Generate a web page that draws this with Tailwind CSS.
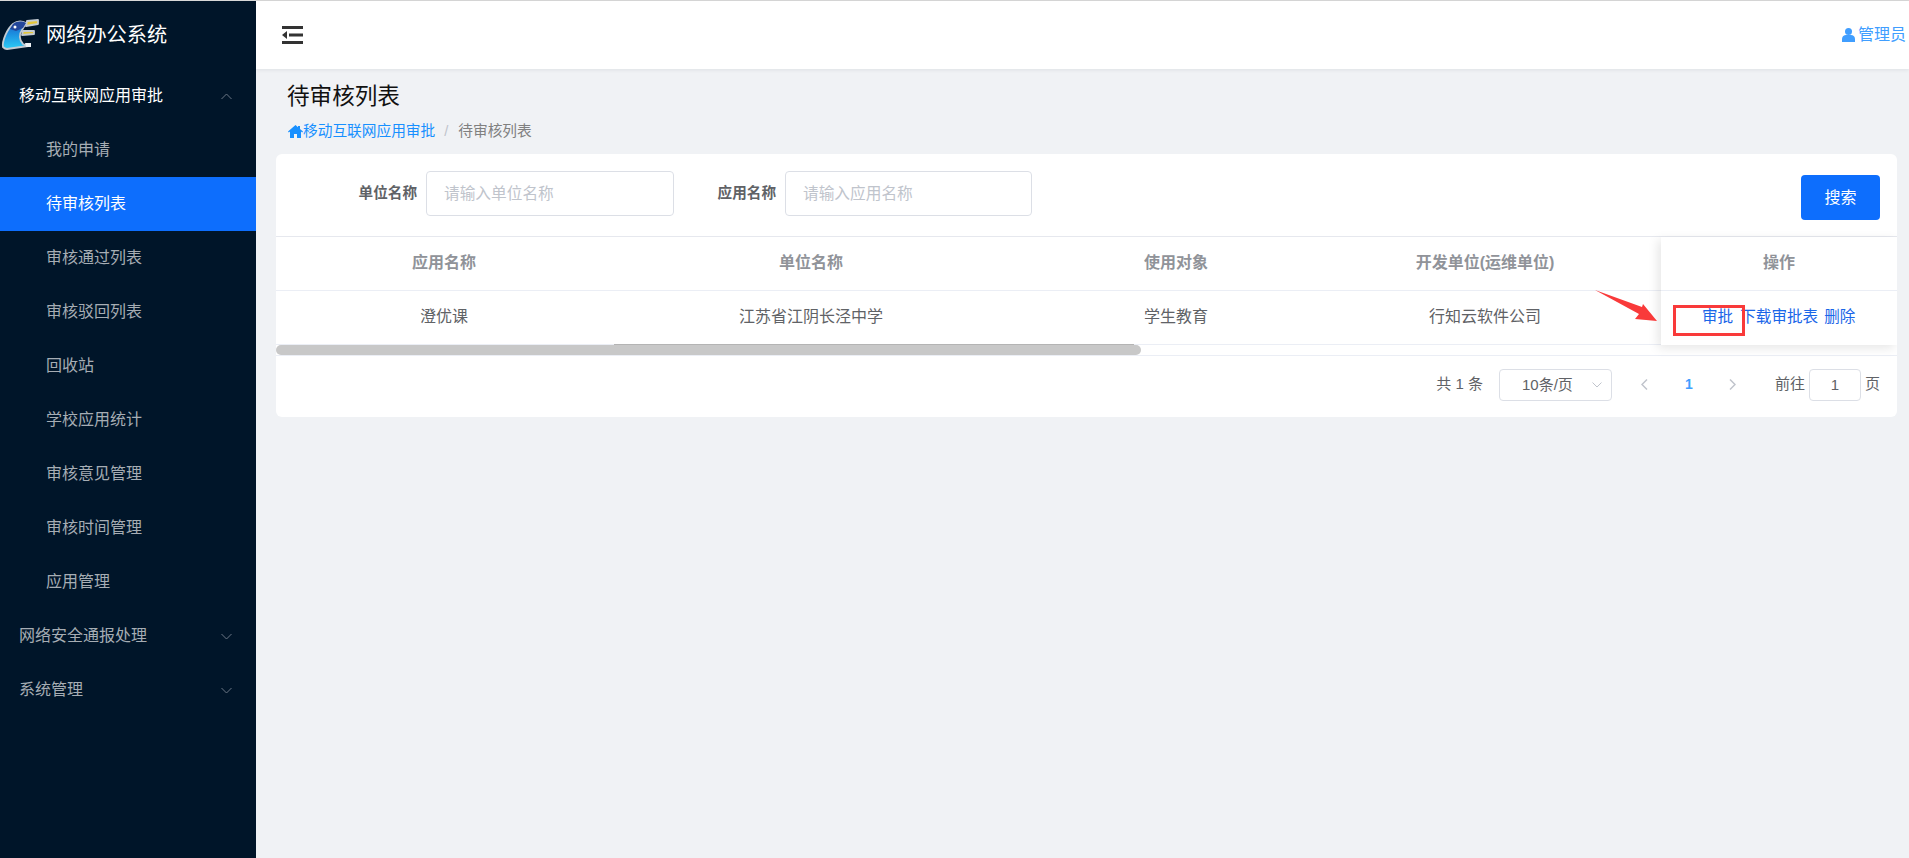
<!DOCTYPE html>
<html lang="zh-CN">
<head>
    <meta charset="UTF-8">
    <title>待审核列表 - 网络办公系统</title>
    <script src="https://cdn.jsdelivr.net/npm/@tailwindcss/browser@4"></script>
</head>
<body class="bg-[#f0f2f5] font-['Liberation_Sans','Noto_Sans_CJK_SC',sans-serif] overflow-hidden">
<div class="flex flex-col h-[858px] w-[1909px]">
    <div class="h-px bg-[#d8d8d8] shrink-0"></div>
    <div class="flex flex-1 min-h-0">
        <!-- Sidebar -->
        <aside class="w-[256px] shrink-0 bg-[#001529] text-[16px]">
            <div class="flex items-center h-[68px]">
                <svg class="w-[40px] h-[34px] ml-px shrink-0" viewBox="0 0 40 34">
                    <defs>
                        <linearGradient id="logo-body" x1="0" y1="0" x2="0" y2="1">
                            <stop offset="0" stop-color="#1d5fc0"/>
                            <stop offset="0.45" stop-color="#1c8fe0"/>
                            <stop offset="1" stop-color="#2ccdf5"/>
                        </linearGradient>
                    </defs>
                    <g stroke="#c3cbd2" stroke-width="1.800" stroke-linejoin="round">
                        <path d="M2 29C1 23 6 11 12 6 16 3 21 3 25 5L21 12C18 16 18 22 22 26L27 28 6 31C4 31 3 30 2 29Z" fill="url(#logo-body)"/>
                        <path d="M26 3 37 2V6L25 8Z" fill="#e3c63a"/>
                        <path d="M22 13H33V16L21 17Z" fill="#e3c63a"/>
                    </g>
                    <path d="M12 6C16 3 21 3 25 5L22 10 15 13 9 11Z" fill="#23479a"/>
                    <circle cx="14" cy="9" r="1.500" fill="#ffffff"/>
                    <path d="M24 25H30V29L25 29Z" fill="#eef1f4"/>
                </svg>
                <span class="ml-[5px] text-[20.2px] text-white">网络办公系统</span>
            </div>
            <nav>
                <div class="flex items-center justify-between h-[54px] pl-[19px] pr-[24px] text-white">
                    <span>移动互联网应用审批</span>
                    <svg class="w-[11px] h-[7px] text-[#6b7785]" viewBox="0 0 11 7" fill="none" stroke="currentColor"><path d="M.5 6 5.500 1l5 5"/></svg>
                </div>
                <a class="flex items-center h-[54px] pl-[46px] text-[#a6adb4]">我的申请</a>
                <a class="flex items-center h-[54px] pl-[46px] text-white bg-[#0d6efd]">待审核列表</a>
                <a class="flex items-center h-[54px] pl-[46px] text-[#a6adb4]">审核通过列表</a>
                <a class="flex items-center h-[54px] pl-[46px] text-[#a6adb4]">审核驳回列表</a>
                <a class="flex items-center h-[54px] pl-[46px] text-[#a6adb4]">回收站</a>
                <a class="flex items-center h-[54px] pl-[46px] text-[#a6adb4]">学校应用统计</a>
                <a class="flex items-center h-[54px] pl-[46px] text-[#a6adb4]">审核意见管理</a>
                <a class="flex items-center h-[54px] pl-[46px] text-[#a6adb4]">审核时间管理</a>
                <a class="flex items-center h-[54px] pl-[46px] text-[#a6adb4]">应用管理</a>
                <div class="flex items-center justify-between h-[54px] pl-[19px] pr-[24px] text-[#a6adb4]">
                    <span>网络安全通报处理</span>
                    <svg class="w-[11px] h-[7px] text-[#6b7785]" viewBox="0 0 11 7" fill="none" stroke="currentColor"><path d="M.5 1l5 5 5-5"/></svg>
                </div>
                <div class="flex items-center justify-between h-[54px] pl-[19px] pr-[24px] text-[#a6adb4]">
                    <span>系统管理</span>
                    <svg class="w-[11px] h-[7px] text-[#6b7785]" viewBox="0 0 11 7" fill="none" stroke="currentColor"><path d="M.5 1l5 5 5-5"/></svg>
                </div>
            </nav>
        </aside>

        <div class="flex-1 min-w-0 flex flex-col">
            <!-- Header -->
            <header class="h-[68px] shrink-0 bg-white shadow-[0_1px_4px_rgba(0,21,41,0.08)] flex items-center justify-between pl-[26px] pr-[3px] relative">
                <svg class="w-[21px] h-[18px] text-[#333]" viewBox="0 0 21 18" fill="currentColor">
                    <path d="M0 0h21v3H0zM7 7.500h14v3H7zM0 15h21v3H0zM5 5v8L0 9z"/>
                </svg>
                <div class="flex items-center gap-[3px] text-[16px] text-[#409eff]">
                    <svg class="w-[13px] h-[14px]" viewBox="0 0 13 14" fill="currentColor">
                        <circle cx="6.500" cy="3.500" r="3.500"/>
                        <path d="M0 14v-3c0-2.500 2-4 4-4h5c2 0 4 1.500 4 4v3z"/>
                    </svg>
                    <span>管理员</span>
                </div>
            </header>

            <main class="flex-1 pl-[20px] pr-[12px]">
                <div class="pl-[11px] pt-[13px] pb-[12px] h-[85px]">
                    <h1 class="text-[22.6px] leading-[30px] text-[#111]">待审核列表</h1>
                    <div class="mt-[9px] flex items-center text-[14.7px] leading-[20px]">
                        <svg class="ml-px w-[15px] h-[13px] text-[#1890ff]" viewBox="0 0 15 13" fill="currentColor">
                            <path d="M7.500 0 0 6.500l.8.9L2 6.400V13h4V9h3v4h4V6.400l1.200 1 .8-.9L12 4V1h-2v1.300z"/>
                        </svg>
                        <span class="text-[#1890ff]">移动互联网应用审批</span>
                        <span class="ml-[9px] mr-[10px] text-[#c0c4cc]">/</span>
                        <span class="text-[#808080]">待审核列表</span>
                    </div>
                </div>

                <!-- Card -->
                <section class="bg-white rounded-[6px] h-[263px] overflow-hidden relative">
                    <div class="flex items-start h-[83px] pt-[17px] border-b border-[#e6e8ee]">
                        <label class="w-[150px] h-[45px] flex items-center justify-end text-[14.6px] font-bold text-[#606266] pr-[9px] shrink-0">单位名称</label>
                        <div class="w-[248px] h-[45px] border border-[#dcdfe6] rounded-[4px] pl-[17px] flex items-center text-[15.7px] text-[#c0c4cc] shrink-0">请输入单位名称</div>
                        <label class="w-[111px] h-[45px] flex items-center justify-end text-[14.6px] font-bold text-[#606266] pr-[9px] shrink-0">应用名称</label>
                        <div class="w-[247px] h-[45px] border border-[#dcdfe6] rounded-[4px] pl-[17px] flex items-center text-[15.7px] text-[#c0c4cc] shrink-0">请输入应用名称</div>
                        <button class="ml-auto mr-[17px] w-[79px] h-[45px] mt-[4px] bg-[#0d6efd] rounded-[4px] text-white text-[16px]">搜索</button>
                    </div>

                    <!-- Table -->
                    <div class="grid grid-cols-[336px_398px_332px_286px_1fr] text-center text-[16px]">
                        <div class="h-[54px] pb-[2px] flex items-center justify-center font-bold text-[#909399] border-b border-[#ebeef5]">应用名称</div>
                        <div class="h-[54px] pb-[2px] flex items-center justify-center font-bold text-[#909399] border-b border-[#ebeef5]">单位名称</div>
                        <div class="h-[54px] pb-[2px] flex items-center justify-center font-bold text-[#909399] border-b border-[#ebeef5]">使用对象</div>
                        <div class="h-[54px] pb-[2px] flex items-center justify-center font-bold text-[#909399] border-b border-[#ebeef5]">开发单位(运维单位)</div>
                        <div class="h-[54px] border-b border-[#ebeef5]"></div>
                        <div class="h-[54px] pb-[2px] flex items-center justify-center text-[#606266] border-b border-[#ebeef5]">澄优课</div>
                        <div class="h-[54px] pb-[2px] flex items-center justify-center text-[#606266] border-b border-[#ebeef5]">江苏省江阴长泾中学</div>
                        <div class="h-[54px] pb-[2px] flex items-center justify-center text-[#606266] border-b border-[#ebeef5]">学生教育</div>
                        <div class="h-[54px] pb-[2px] flex items-center justify-center text-[#606266] border-b border-[#ebeef5]">行知云软件公司</div>
                        <div class="h-[54px] border-b border-[#ebeef5]"></div>
                    </div>

                    <!-- Scrollbar -->
                    <div class="h-[11px] border-b border-[#ebeef5] relative">
                        <div class="w-[865px] h-[10px] rounded-[5px] bg-[#c8c8c8]"></div>
                        <div class="absolute left-[338px] top-[-1px] w-[520px] h-px bg-[#b4b4b4]"></div>
                    </div>

                    <!-- Pagination -->
                    <div class="flex items-start h-[60px] pt-[13px] justify-end pr-[17px] text-[15px] text-[#606266]">
                        <span class="leading-[30px]">共 1 条</span>
                        <div class="ml-[16px] w-[113px] h-[32px] border border-[#dcdfe6] rounded-[4px] flex items-center justify-between pl-[22px] pr-[9px]">
                            <span>10条/页</span>
                            <svg class="w-[10px] h-[6px] text-[#c0c4cc]" viewBox="0 0 10 6" fill="none" stroke="currentColor"><path d="M.5.500 5 5 9.500.5"/></svg>
                        </div>
                        <svg class="ml-[29px] mt-[10px] w-[7px] h-[11px] text-[#c0c4cc]" viewBox="0 0 7 11" fill="none" stroke="currentColor" stroke-width="1.500"><path d="M6 .5 1 5.500l5 5"/></svg>
                        <span class="ml-[37px] w-[8px] leading-[30px] text-center font-bold text-[#409eff] text-[14px]">1</span>
                        <svg class="ml-[36px] mt-[10px] w-[7px] h-[11px] text-[#c0c4cc]" viewBox="0 0 7 11" fill="none" stroke="currentColor" stroke-width="1.500"><path d="M1 .5l5 5-5 5"/></svg>
                        <span class="ml-[39px] leading-[30px]">前往</span>
                        <div class="ml-[4px] w-[52px] h-[32px] border border-[#dcdfe6] rounded-[4px] flex items-center justify-center">1</div>
                        <span class="ml-[4px] leading-[30px]">页</span>
                    </div>

                    <!-- Fixed column -->
                    <div class="absolute left-[1385px] top-[83px] w-[236px] h-[108px] bg-white shadow-[-3px_3px_10px_rgba(0,0,0,0.10)]">
                        <div class="h-[54px] pb-[2px] flex items-center justify-center font-bold text-[16px] text-[#909399] border-b border-[#ebeef5]">操作</div>
                        <div class="h-[54px] pb-[2px] flex items-center pl-[41px] text-[15.6px] text-[#1a66e8]">
                            <a>审批</a>
                            <a class="ml-[7px]">下载审批表</a>
                            <a class="ml-[6px]">删除</a>
                        </div>
                    </div>

                    <!-- Annotation -->
                    <div class="absolute left-[1397px] top-[151px] w-[72px] h-[31px] border-[3px] border-[#f93a3a]"></div>
                    <svg class="absolute left-[1319px] top-[136px] w-[66px] h-[32px]" viewBox="0 0 66 32">
                        <path d="M0 0 47 17 48 14 62 31 40 29 44 24Z" fill="#f93a3a"/>
                    </svg>
                </section>
            </main>
        </div>
    </div>
</div>
</body>
</html>
